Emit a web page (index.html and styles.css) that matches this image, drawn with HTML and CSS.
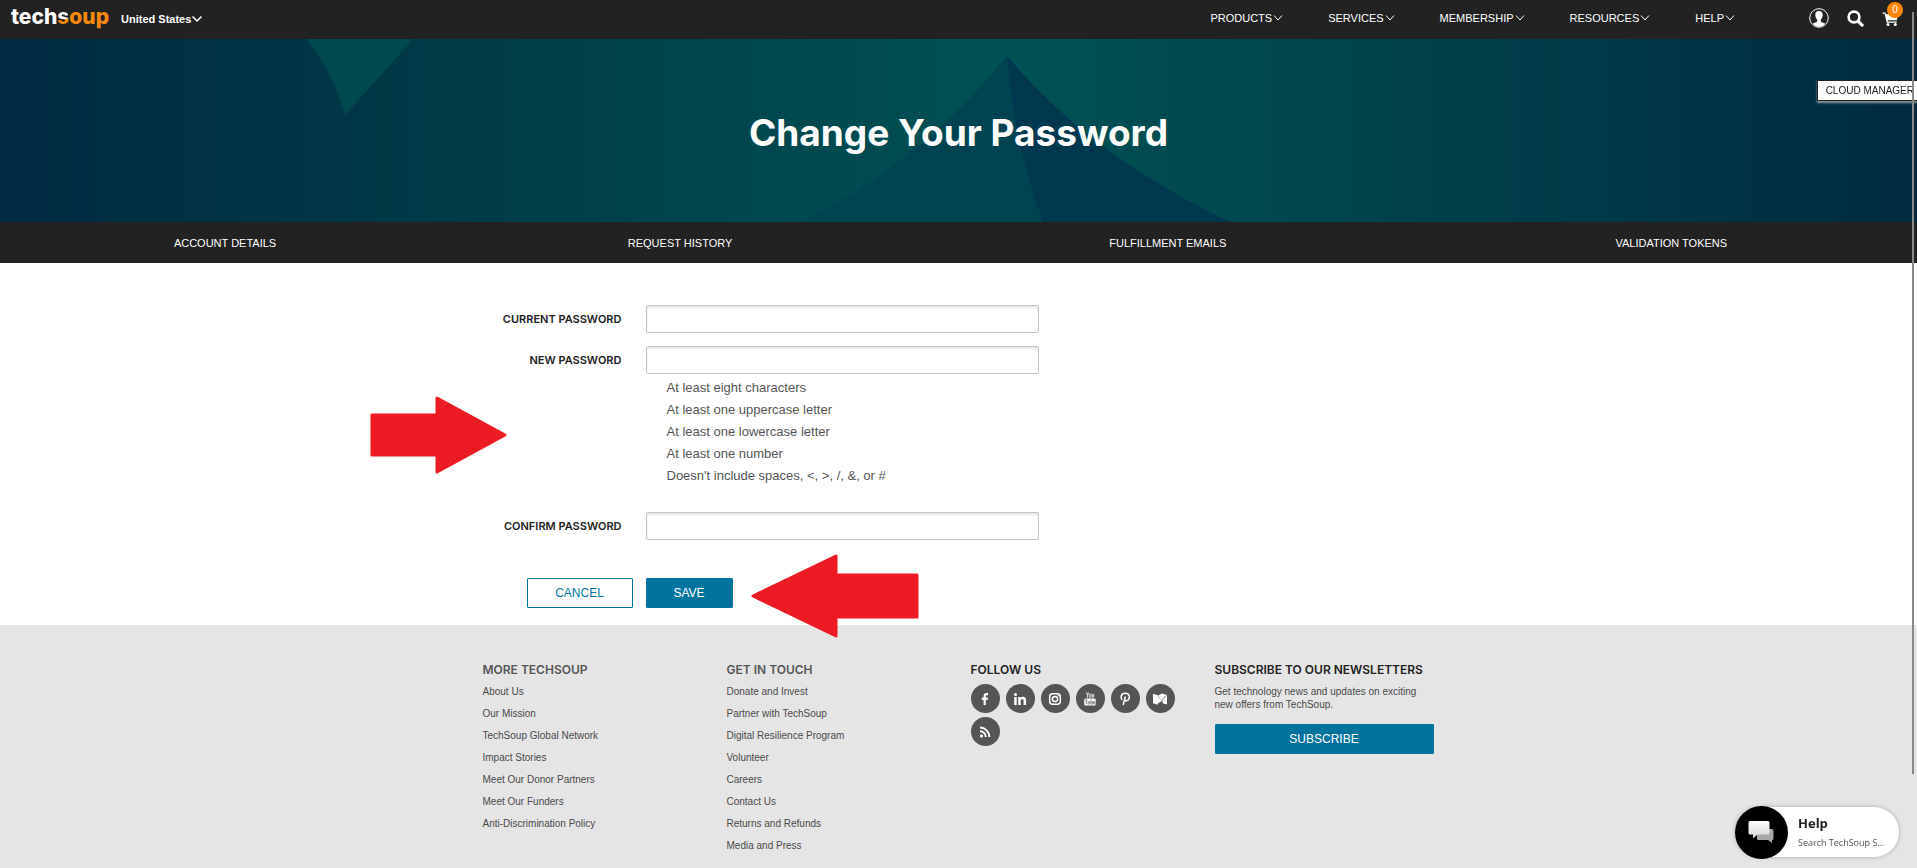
FILE: index.html
```html
<!DOCTYPE html>
<html lang="en">

<head>
    <meta charset="UTF-8">
    <title>Change Your Password</title>
    <link rel="stylesheet" href="styles.css">
</head>

<body>
    <header class="top_bar">
        <a class="logo" href="#">tech<span class="logo_s">s</span><span class="logo_on">oup</span></a>
        <button class="country" type="button">United States<svg class="chevron" viewBox="0 0 12 8"><path d="M1.500 1.500L6 6l4.500-4.500"/></svg></button>
        <nav class="main_nav">
            <a href="#">PRODUCTS<svg class="chevron" viewBox="0 0 12 8"><path d="M2 1.500L6 6l4-4.500"/></svg></a>
            <a href="#">SERVICES<svg class="chevron" viewBox="0 0 12 8"><path d="M2 1.500L6 6l4-4.500"/></svg></a>
            <a href="#">MEMBERSHIP<svg class="chevron" viewBox="0 0 12 8"><path d="M2 1.500L6 6l4-4.500"/></svg></a>
            <a href="#">RESOURCES<svg class="chevron" viewBox="0 0 12 8"><path d="M2 1.500L6 6l4-4.500"/></svg></a>
            <a href="#">HELP<svg class="chevron" viewBox="0 0 12 8"><path d="M2 1.500L6 6l4-4.500"/></svg></a>
        </nav>
        <div class="tools">
            <a href="#" aria-label="Account">
                <svg width="20" height="20" viewBox="0 0 20 20"><circle cx="10" cy="10" r="9.300" fill="none" stroke="#fff"/><path fill="#fff" d="M10 3c-2.700 0-3.900 1.700-3.700 4.200.1 1.900.8 3.400 1.900 4.300v1.700c-.4 1.100-2.700 1.400-4.300 2.300C5.300 17.600 7.500 18.800 10 18.800s4.700-1.200 6.100-3.300c-1.600-.9-3.900-1.200-4.300-2.300v-1.700c1.100-.9 1.800-2.400 1.900-4.300C13.900 4.700 12.700 3 10 3z"/></svg>
            </a>
            <a href="#" aria-label="Search">
                <svg width="17" height="17" viewBox="0 0 17 17" fill="none" stroke="#fff"><circle cx="7" cy="7" r="5.400" stroke-width="2.600"/><path stroke-width="3.200" stroke-linecap="round" d="M11.300 11.300l3.800 3.800"/></svg>
            </a>
            <a class="cart" href="#" aria-label="Cart">
                <svg width="17" height="17" viewBox="0 0 17 17" fill="#fff"><path d="M.5 2.500h3l.5 1.700h12l-1.200 6H5.600l.3 1.300h8.800v1.300H4.700L2.600 3.800H.5z"/><circle cx="6" cy="14.500" r="1.500"/><circle cx="13.300" cy="14.500" r="1.500"/></svg>
                <span class="cart_num">0</span>
            </a>
        </div>
    </header>

    <div class="hero">
        <svg class="hero_bg" viewBox="0 0 1917 183" preserveAspectRatio="none">
            <path fill="#004a4f" d="M307 0Q334 36 345 76L413 0z"/>
            <path fill="#004451" d="M1007 17Q916 128 800 183H1043Q1012 100 1007 17z"/>
            <path fill="#00384f" d="M1007 17Q1012 100 1043 183H1230Q1090 116 1007 17z"/>
        </svg>
        <h1>Change Your Password</h1>
    </div>

    <nav class="sub_nav">
        <a href="#">ACCOUNT DETAILS</a>
        <a href="#">REQUEST HISTORY</a>
        <a href="#">FULFILLMENT EMAILS</a>
        <a href="#">VALIDATION TOKENS</a>
    </nav>

    <main>
        <form class="pwd_form">
            <div class="row">
                <label for="current">CURRENT PASSWORD</label>
                <input id="current" type="password">
            </div>
            <div class="row">
                <label for="newpwd">NEW PASSWORD</label>
                <input id="newpwd" type="password">
            </div>
            <ul class="rules">
                <li>At least eight characters</li>
                <li>At least one uppercase letter</li>
                <li>At least one lowercase letter</li>
                <li>At least one number</li>
                <li>Doesn't include spaces, &lt;, &gt;, /, &amp;, or #</li>
            </ul>
            <div class="row">
                <label for="confirm">CONFIRM PASSWORD</label>
                <input id="confirm" type="password">
            </div>
            <div class="actions">
                <button class="btn btn_line" type="button">CANCEL</button>
                <button class="btn" type="submit">SAVE</button>
            </div>
            <svg class="arrow arrow_rules" width="138" height="80" viewBox="0 0 138 80"><path d="M2 20h65V3l68 37-68 37V60H2z"/></svg>
            <svg class="arrow arrow_save" width="170" height="84" viewBox="0 0 170 84"><path d="M167 21h-81V2L3 42l83 40V63h81z"/></svg>
        </form>
    </main>

    <footer class="footer">
        <div class="footer_in">
            <div class="col">
                <h2 class="grey">MORE TECHSOUP</h2>
                <ul>
                    <li><a href="#">About Us</a></li>
                    <li><a href="#">Our Mission</a></li>
                    <li><a href="#">TechSoup Global Network</a></li>
                    <li><a href="#">Impact Stories</a></li>
                    <li><a href="#">Meet Our Donor Partners</a></li>
                    <li><a href="#">Meet Our Funders</a></li>
                    <li><a href="#">Anti-Discrimination Policy</a></li>
                </ul>
            </div>
            <div class="col">
                <h2 class="grey">GET IN TOUCH</h2>
                <ul>
                    <li><a href="#">Donate and Invest</a></li>
                    <li><a href="#">Partner with TechSoup</a></li>
                    <li><a href="#">Digital Resilience Program</a></li>
                    <li><a href="#">Volunteer</a></li>
                    <li><a href="#">Careers</a></li>
                    <li><a href="#">Contact Us</a></li>
                    <li><a href="#">Returns and Refunds</a></li>
                    <li><a href="#">Media and Press</a></li>
                </ul>
            </div>
            <div class="col">
                <h2>FOLLOW US</h2>
                <div class="social">
                    <a href="#" aria-label="Facebook"><svg viewBox="0 0 14 14"><path d="M5.600 13V8H3.900V5.500h1.700V3.900C5.600 1.900 6.700.9 8.500.9c.8 0 1.300.1 1.500.1v2.200H8.900c-.9 0-1.100.4-1.100 1.100v1.200h2.100L9.600 8H7.800v5z"/></svg></a>
                    <a href="#" aria-label="LinkedIn"><svg viewBox="0 0 14 14"><circle cx="2.500" cy="2.600" r="1.500"/><path d="M1.200 5h2.500v8H1.200zM5.200 5h2.400v1.100c.5-.8 1.300-1.300 2.500-1.300 2 0 3 1.300 3 3.600V13h-2.500V8.800c0-1.200-.4-1.900-1.300-1.900-1 0-1.600.7-1.600 1.900V13H5.200z"/></svg></a>
                    <a href="#" aria-label="Instagram"><svg viewBox="0 0 14 14" class="outline"><rect x="1.700" y="1.700" width="10.600" height="10.600" rx="3"/><circle cx="7" cy="7" r="2.600"/><circle class="dot" cx="10.200" cy="3.800" r=".8"/></svg></a>
                    <a href="#" aria-label="YouTube"><svg viewBox="0 0 14 14"><path class="thin" d="M3.500.3l1 3v2.200m1-5.200l-1 3M6.200 2.800q0-1 .9-1t.9 1v1.700q0 1-.9 1t-.9-1zM9.300 1.800v3q0 .7.600.7t.8-.6V1.800"/><rect x="1.200" y="6.500" width="11.600" height="7" rx="1.500"/><path class="cut" d="M2.200 8h2.200m-1.100 0v4.300M5.200 9.200v2.500q0 .6.500.6t.8-.5V9.200M8 7.800v4.500h.8q.5 0 .5-.6V9.800q0-.6-.5-.6H8m4 2.200q0 .9-.7.900t-.7-.9V10q0-.8.700-.8t.7.800v.7h-1.400"/></svg></a>
                    <a href="#" aria-label="Pinterest"><svg viewBox="0 0 14 14" class="outline"><path d="M4.100 8C2.400 6.200 2.500 1.300 7.200 1.300c4.500 0 5 4.300 3.200 6.500-1.500 1.700-3.200 1-3.500.1M7.400 4.500L5.200 13"/></svg></a>
                    <a href="#" aria-label="Medium"><svg viewBox="0 0 14 14"><path d="M0 1.800l4.800 1.500v9.500L0 11.200zM4.800 3.600l3.700 5.600-3.700 2.300z"/><path d="M8.900 1.500L14 3v9.600l-4.400-1.400V8.800l-.9.700L5.200 3.600z"/><path class="cut" d="M8.300 9.400l5-6.100"/></svg></a>
                    <a href="#" aria-label="RSS"><svg viewBox="0 0 14 14"><circle cx="3.500" cy="11" r="1.600"/><path class="wave" d="M2 6.200a5.800 5.800 0 0 1 5.800 5.800M2 2.600a9.400 9.400 0 0 1 9.400 9.400"/></svg></a>
                </div>
            </div>
            <div class="col">
                <h2>SUBSCRIBE TO OUR NEWSLETTERS</h2>
                <p>Get technology news and updates on exciting new offers from TechSoup.</p>
                <button class="btn btn_full" type="button">SUBSCRIBE</button>
            </div>
        </div>
    </footer>

    <a class="cloud_tab" href="#">CLOUD MANAGER</a>
    <div class="scroll_thumb"></div>
    <button class="help" type="button">
        <span class="help_icon">
            <svg width="27" height="24" viewBox="0 0 27 24">
                <defs>
                    <linearGradient id="bubble" x2="0" y2="1"><stop offset="0" stop-color="#fff"/><stop offset="1" stop-color="#d5d5d5"/></linearGradient>
                </defs>
                <path fill="#a8a8a8" d="M10 9h14q1.500 0 1.500 1.500v8q0 1.500-1.500 1.500v3l-4-3H10q-1 0-1-1v-9z"/>
                <path fill="url(#bubble)" d="M2 1h18q1.500 0 1.500 1.500v10.500q0 1.500-1.500 1.500H9.500L5 18.500v-4H2Q.5 14.500.5 13V2.500Q.5 1 2 1z"/>
            </svg>
        </span>
        <span class="help_text"><b>Help</b><span>Search TechSoup S...</span></span>
    </button>
</body>

</html>
```
FILE: styles.css
```css
* {
    box-sizing: border-box;
}

body {
    display: flex;
    flex-direction: column;
    min-height: 100vh;
    margin: 0;
    font-family: "Liberation Sans", Arial, sans-serif;
    font-size: 11px;
    color: #222;
    background-color: #fff;
}

a {
    color: inherit;
    text-decoration: none;
}

button {
    font-family: inherit;
    cursor: pointer;
}

h1, h2, p, ul {
    margin: 0;
    padding: 0;
}

ul {
    list-style: none;
}

/* top bar */
.top_bar {
    display: flex;
    align-items: center;
    height: 39px;
    padding: 0 18px 3px 11px;
    color: #fff;
    background-color: #222;
}

.logo {
    padding-bottom: 3px;
    font: 800 21px/28px Inter, sans-serif;
}

.logo_s {
    color: transparent;
    background: linear-gradient(#fff 60%, #f7890c 60%);
    -webkit-background-clip: text;
    background-clip: text;
}

.logo_on {
    color: #f7890c;
}

.country {
    margin-left: 12px;
    padding: 2px 0 0;
    border: 0;
    font-size: 11px;
    font-weight: bold;
    color: #fff;
    background: none;
}

.chevron {
    width: 12px;
    height: 8px;
    fill: none;
    stroke: #fff;
}

.country .chevron {
    stroke-width: 1.5;
}

.main_nav {
    display: flex;
    gap: 44px;
    margin-left: auto;
}

.tools {
    display: flex;
    align-items: center;
    gap: 18px;
    margin-left: 73px;
}

.tools a {
    display: block;
    position: relative;
}

.tools svg {
    display: block;
}

.cart_num {
    position: absolute;
    top: -8px;
    left: 5px;
    width: 16px;
    line-height: 16px;
    border-radius: 50%;
    font-size: 10px;
    text-align: center;
    background-color: #ff850a;
}

/* hero */
.hero {
    position: relative;
    display: flex;
    align-items: center;
    justify-content: center;
    height: 183px;
    padding-top: 4px;
    background: linear-gradient(90deg, #002a42, #003846 20%, #005254 53%, #003b48 81%, #002a40);
}

.hero_bg {
    position: absolute;
    top: 0;
    left: 0;
    width: 100%;
    height: 100%;
}

.hero h1 {
    position: relative;
    font: bold 37px/50px Inter, sans-serif;
    color: #fff;
}

.sub_nav {
    display: table;
    width: 100%;
    line-height: 39px;
    color: #fff;
    background-color: #222;
}

.sub_nav a {
    display: table-cell;
    padding-top: 2px;
    text-align: center;
}

/* form */
.pwd_form {
    position: relative;
    width: 976px;
    margin: 0 auto;
    padding: 42px 0 17px;
}

.row {
    display: flex;
    align-items: center;
    gap: 24px;
    margin-bottom: 13px;
}

.row label {
    width: 151px;
    font-family: Inter, sans-serif;
    font-weight: 600;
    text-align: right;
}

.row input {
    width: 393px;
    height: 28px;
    border: 1px solid #c4c4c4;
    border-radius: 2px;
    box-shadow: inset 0 2px 2px #e8e8e8;
}

.rules {
    margin: -10px 0 25px 196px;
    font-size: 13px;
    line-height: 22px;
    color: #555;
}

.actions {
    display: flex;
    gap: 13px;
    margin: 38px 0 0 56px;
}

.btn {
    height: 30px;
    padding: 0 27px;
    border: 1px solid #00739f;
    border-radius: 1px;
    font-size: 12px;
    color: #fff;
    background-color: #00739f;
}

.btn_line {
    min-width: 106px;
    color: #00739f;
    background-color: #fff;
}

.btn_full {
    width: 100%;
}

.arrow {
    position: absolute;
    fill: #ed1c24;
    stroke: #ed1c24;
    stroke-width: 3;
    stroke-linejoin: round;
}

.arrow_rules {
    top: 132px;
    left: -101px;
}

.arrow_save {
    top: 291px;
    left: 279px;
}

/* footer */
.footer {
    flex: 1;
    padding: 34px 0 11px;
    background-color: #e5e5e5;
}

.footer_in {
    display: grid;
    grid-template-columns: repeat(4, 1fr);
    width: 976px;
    margin: 0 auto;
}

.col {
    padding: 0 13px 0 12px;
    font-size: 10px;
    color: #4a4a4a;
}

.col h2 {
    font: 600 12px/22px Inter, sans-serif;
    color: #222;
    white-space: nowrap;
}

.col .grey {
    color: #555;
}

.col li {
    line-height: 22px;
}

.col p {
    margin: 4px 0 13px;
    line-height: 13px;
}

.social {
    display: flex;
    flex-wrap: wrap;
    gap: 4px 6px;
    margin-top: 3px;
}

.social a {
    display: flex;
    align-items: center;
    justify-content: center;
    width: 29px;
    height: 29px;
    border-radius: 50%;
    background-color: #555;
}

.social svg {
    width: 14px;
    height: 14px;
    fill: #fff;
}

.social .outline {
    fill: none;
    stroke: #fff;
    stroke-width: 1.5;
}

.social .dot {
    fill: #fff;
    stroke: none;
}

.social .thin {
    fill: none;
    stroke: #fff;
    stroke-width: .8;
}

.social .cut {
    fill: none;
    stroke: #555;
    stroke-width: .7;
}

.social .wave {
    fill: none;
    stroke: #fff;
    stroke-width: 2;
}

/* things that stay over the page */
.cloud_tab {
    position: fixed;
    top: 80px;
    right: 0;
    padding: 0 3px 0 8px;
    border: 1px solid #222;
    border-right: 0;
    font-size: 10px;
    line-height: 19px;
    background-color: #fff;
    box-shadow: 0 2px 2px #8a9a9f;
}

.scroll_thumb {
    position: fixed;
    top: 12px;
    right: 3px;
    width: 2px;
    height: 762px;
    background-color: #888;
}

.help {
    position: fixed;
    right: 18px;
    bottom: 11px;
    display: flex;
    align-items: center;
    gap: 10px;
    width: 164px;
    height: 50px;
    padding: 0;
    border: 0;
    border-radius: 25px;
    font-family: "Open Sans", sans-serif;
    text-align: left;
    color: #222;
    background-color: #fff;
    box-shadow: 0 0 4px #aaa;
}

.help_icon {
    display: flex;
    align-items: center;
    justify-content: center;
    width: 53px;
    height: 53px;
    border-radius: 50%;
    background-color: #000;
}

.help_text b {
    display: block;
    font-size: 13px;
    line-height: 18px;
}

.help_text span {
    font-size: 9px;
    line-height: 14px;
    color: #555;
}
```
